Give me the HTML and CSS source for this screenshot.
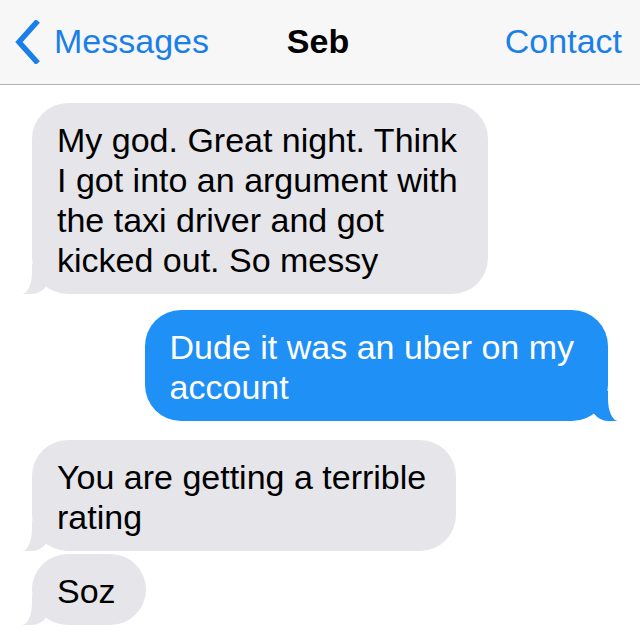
FILE: index.html
```html
<!DOCTYPE html>
<html lang="en">

<head>
    <meta charset="UTF-8">
    <meta name="viewport" content="width=device-width, initial-scale=1.0">
    <title>Seb</title>
    <link rel="stylesheet" href="styles.css">
</head>

<body>
    <header class="nav-bar">
        <a class="nav-back" href="#">
            <svg class="chevron" width="26" height="44" viewBox="0 0 26 44">
                <path d="M22 3 L5 22 L22 41" fill="none" stroke="currentColor" stroke-width="5.5" stroke-linecap="square" stroke-linejoin="miter"/>
            </svg>
            <span>Messages</span>
        </a>
        <h1 class="nav-title">Seb</h1>
        <a class="nav-action" href="#">Contact</a>
    </header>

    <main class="thread">
        <div class="bubble them">My god. Great night. Think<br>I got into an argument with<br>the taxi driver and got<br>kicked out. So messy</div>
        <div class="bubble me">Dude it was an uber on my<br>account</div>
        <div class="bubble them">You are getting a terrible<br>rating</div>
        <div class="bubble them next">Soz</div>
    </main>
</body>

</html>
```

FILE: styles.css
```css
:root {
    --tint-color: #1a7fe8;
    --nav-bg: #f7f7f7;
    --nav-line: #b4b4b4;
    --grey-bubble: #e5e5ea;
    --blue-bubble: #1f90f6;
    --ui-font: 'Liberation Sans', Arial, sans-serif;
}

* {
    box-sizing: border-box;
}

body {
    margin: 0;
    font-family: var(--ui-font);
    background: #fff;
    color: #000;
}

/* top navigation bar */
.nav-bar {
    display: grid;
    grid-template-columns: 1fr auto 1fr;
    align-items: center;
    height: 85px;
    padding: 0 18px 2px 14px;
    background: var(--nav-bg);
    border-bottom: 1px solid var(--nav-line);
    font-size: 34px;
    line-height: 40px;
}

.nav-bar a {
    color: var(--tint-color);
    text-decoration: none;
}

.nav-back {
    display: flex;
    align-items: center;
    gap: 14px;
    justify-self: start;
}

.chevron {
    display: block;
    margin-top: 1px;
}

.nav-title {
    margin: 0;
    font-size: 34px;
    font-weight: bold;
}

.nav-action {
    justify-self: end;
}

/* message list */
.thread {
    display: flex;
    flex-direction: column;
    padding: 18px 32px;
}

.bubble {
    position: relative;
    z-index: 0;
    width: fit-content;
    padding: 17px 30px 14px 25px;
    border-radius: 36px;
    font-size: 34px;
    line-height: 40px;
    margin-top: 17px;
}

.bubble:first-child {
    margin-top: 0;
}

.bubble.next {
    margin-top: 3px;
}

.bubble::before,
.bubble::after {
    content: "";
    position: absolute;
    z-index: -1;
    bottom: 0;
    height: 30px;
}

.them {
    align-self: flex-start;
    background: var(--grey-bubble);
}

.them::before {
    left: -10px;
    width: 30px;
    background: var(--grey-bubble);
    border-bottom-right-radius: 20px 26px;
}

.them::after {
    left: -20px;
    width: 20px;
    background: #fff;
    border-bottom-right-radius: 10px 22px;
}

.me {
    align-self: flex-end;
    background: var(--blue-bubble);
    color: #fff;
    padding-right: 34px;
    margin-top: 16px;
    margin-bottom: 2px;
}

.me::before {
    right: -10px;
    width: 30px;
    background: var(--blue-bubble);
    border-bottom-left-radius: 20px 26px;
}

.me::after {
    right: -20px;
    width: 20px;
    background: #fff;
    border-bottom-left-radius: 10px 22px;
}
```
